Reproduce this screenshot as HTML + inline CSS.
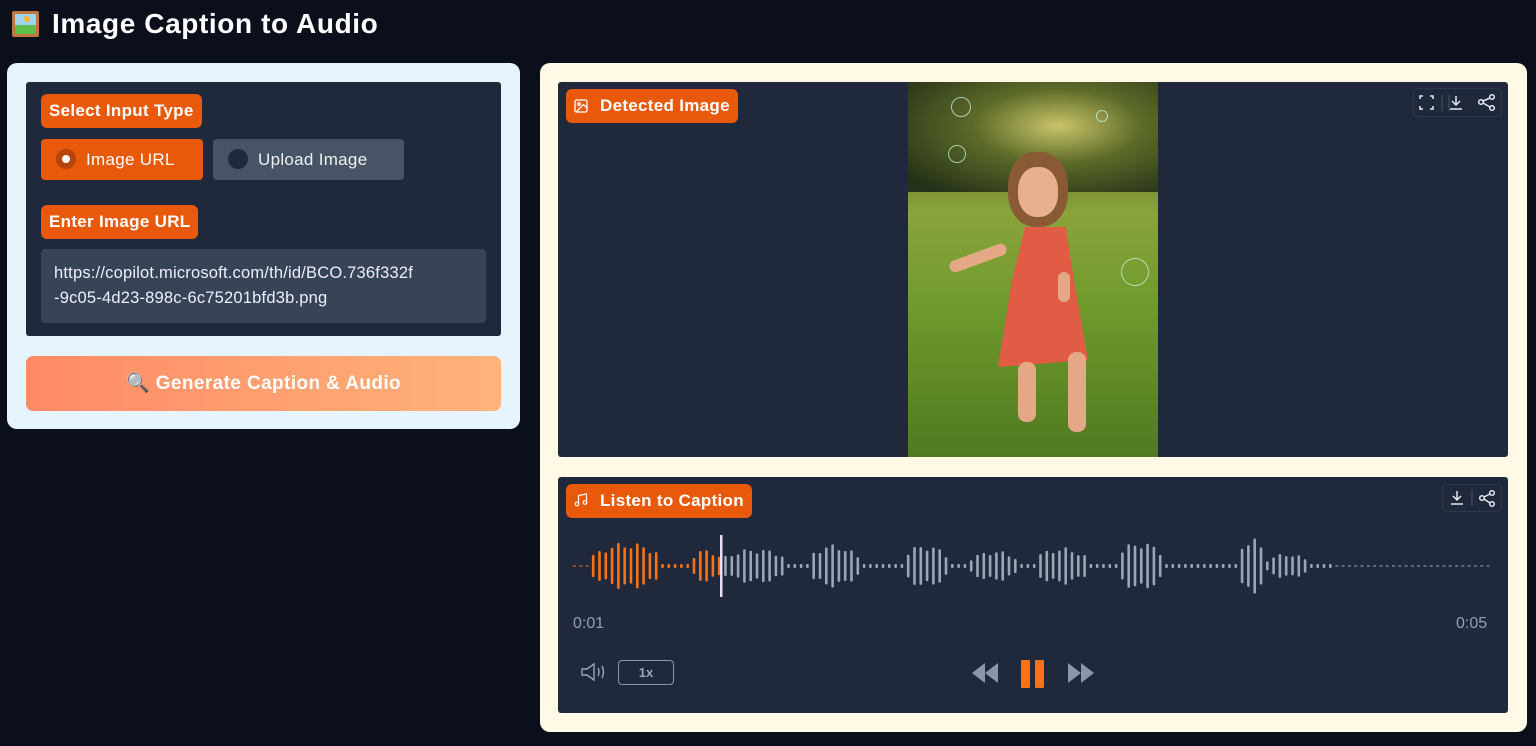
<!DOCTYPE html>
<html><head><meta charset="utf-8"><style>
*{box-sizing:border-box;margin:0;padding:0}
body{width:1536px;height:746px;background:#0b0f1c;font-family:"Liberation Sans",sans-serif;position:relative;overflow:hidden;color:#fff}
.abs{position:absolute}
.tag{position:absolute;background:#e8590c;color:#fff;font-weight:bold;font-size:17px;border-radius:6px;padding:0 8px;line-height:34px;white-space:nowrap;letter-spacing:0.3px}
.dark{background:#1f293b}
</style></head><body>
<div class="abs" style="left:12px;top:11px;width:27px;height:26px;background:#c0773f;border-radius:2px">
 <div class="abs" style="left:3px;top:3px;width:21px;height:20px;background:linear-gradient(#9fd3f0 0 55%,#5cbf4a 55%)"></div>
 <div class="abs" style="left:12px;top:5px;width:6px;height:6px;border-radius:50%;background:#f7b733"></div>
</div>
<div class="abs" style="left:52px;top:6px;font-size:28px;font-weight:bold;line-height:36px;letter-spacing:0.6px">Image Caption to Audio</div>

<div class="abs" style="left:7px;top:63px;width:513px;height:366px;background:#e6f5fd;border-radius:10px"></div>
<div class="abs dark" style="left:26px;top:82px;width:475px;height:254px;border-radius:3px"></div>
<div class="tag" style="left:41px;top:94px">Select Input Type</div>
<div class="abs" style="left:41px;top:139px;width:162px;height:41px;background:#e8590c;border-radius:4px;font-size:17px;line-height:41px;padding-left:45px;letter-spacing:0.3px">Image URL</div>
<div class="abs" style="left:56px;top:149px;width:20px;height:20px;border-radius:50%;background:#b8440a"></div>
<div class="abs" style="left:62px;top:155px;width:8px;height:8px;border-radius:50%;background:#fff"></div>
<div class="abs" style="left:213px;top:139px;width:191px;height:41px;background:#465466;border-radius:4px;font-size:17px;line-height:41px;padding-left:45px;color:#f0f0f0;letter-spacing:0.3px">Upload Image</div>
<div class="abs" style="left:228px;top:149px;width:20px;height:20px;border-radius:50%;background:#1f293b"></div>
<div class="tag" style="left:41px;top:205px">Enter Image URL</div>
<div class="abs" style="left:41px;top:249px;width:445px;height:74px;background:#374456;border-radius:4px;font-size:16.5px;line-height:25px;padding:12px 13px;color:#eef;letter-spacing:0.2px">https://copilot.microsoft.com/th/id/BCO.736f332f<br>-9c05-4d23-898c-6c75201bfd3b.png</div>
<div class="abs" style="left:26px;top:356px;width:475px;height:55px;border-radius:7px;background:linear-gradient(90deg,#ff8a65,#ffb37a);font-size:19px;font-weight:bold;text-align:center;line-height:55px;letter-spacing:0.4px">🔍 Generate Caption &amp; Audio</div>

<div class="abs" style="left:540px;top:63px;width:987px;height:669px;background:#fff9e6;border-radius:10px"></div>
<div class="abs dark" style="left:558px;top:82px;width:950px;height:375px;border-radius:3px"></div>
<div class="abs" style="left:908px;top:82px;width:250px;height:375px;overflow:hidden;background:linear-gradient(#3b4a22 0%,#6b7a2e 18%,#8aa33a 35%,#6f9a2c 60%,#4f7a20 100%)">
 <div class="abs" style="left:0;top:0;width:250px;height:110px;background:radial-gradient(ellipse at 60% 40%,#c9c46a 0%,#5c6a28 40%,#243018 90%)"></div>
 <div class="abs" style="left:100px;top:70px;width:60px;height:75px;border-radius:45%;background:#8a5a35"></div>
 <div class="abs" style="left:110px;top:85px;width:40px;height:50px;border-radius:45%;background:#e8b08c"></div>
 <div class="abs" style="left:90px;top:145px;width:90px;height:140px;background:#e05c45;clip-path:polygon(30% 0,75% 0,85% 40%,100% 95%,0 100%,15% 40%)"></div>
 <div class="abs" style="left:110px;top:280px;width:18px;height:60px;background:#e4a886;border-radius:8px"></div>
 <div class="abs" style="left:160px;top:270px;width:18px;height:80px;background:#e4a886;border-radius:8px"></div>
 <div class="abs" style="left:40px;top:170px;width:60px;height:12px;background:#e4a886;border-radius:6px;transform:rotate(-20deg)"></div>
 <div class="abs" style="left:150px;top:190px;width:12px;height:30px;background:#e4a886;border-radius:6px"></div>
 <div class="abs" style="left:43px;top:15px;width:20px;height:20px;border-radius:50%;border:1px solid #cfe;opacity:.7"></div>
 <div class="abs" style="left:40px;top:63px;width:18px;height:18px;border-radius:50%;border:1px solid #cfe;opacity:.7"></div>
 <div class="abs" style="left:213px;top:176px;width:28px;height:28px;border-radius:50%;border:1px solid #cfe;opacity:.7"></div>
 <div class="abs" style="left:188px;top:28px;width:12px;height:12px;border-radius:50%;border:1px solid #cfe;opacity:.7"></div>
</div>
<div class="tag" style="left:566px;top:89px;padding-left:34px">Detected Image</div>
<svg class="abs" style="left:574px;top:99px" width="14" height="14" viewBox="0 0 14 14" fill="none" stroke="#fff" stroke-width="1.3"><rect x="1" y="1" width="12" height="12" rx="1.5"/><circle cx="5" cy="5" r="1.3"/><path d="M13 9l-3.5-3.5L2 13"/></svg>
<div class="abs" style="left:1413px;top:88px;width:89px;height:29px;border:1px solid #2c3748;border-radius:4px;background:#1f293b"></div>
<svg class="abs" style="left:1413px;top:88px" width="89" height="29" fill="none" stroke="#e6e9ee" stroke-width="1.5"><path d="M7 11V8h3M17 8h3v3M20 18v3h-3M10 21H7v-3"/><path d="M29 7v16M36 7v16" stroke="#3a4556"/><path d="M43 8v9M39 13l4 4 4-4M37 21h12"/><circle cx="68" cy="14" r="2.3"/><circle cx="79" cy="9" r="2.3"/><circle cx="79" cy="20" r="2.3"/><path d="M70 13l7-3M70 15l7 4"/></svg>

<div class="abs dark" style="left:558px;top:477px;width:950px;height:236px;border-radius:3px"></div>
<div class="tag" style="left:566px;top:484px;padding-left:34px">Listen to Caption</div>
<svg class="abs" style="left:574px;top:493px" width="14" height="14" viewBox="0 0 14 14" fill="none" stroke="#fff" stroke-width="1.2"><path d="M4.5 11V2.5l8-1.5V9.5"/><circle cx="3" cy="11" r="1.8"/><circle cx="11" cy="9.5" r="1.8"/></svg>
<div class="abs" style="left:1442px;top:484px;width:60px;height:28px;border:1px solid #2c3748;border-radius:4px"></div>
<svg class="abs" style="left:1442px;top:484px" width="60" height="28" fill="none" stroke="#e6e9ee" stroke-width="1.5"><path d="M15 7v9M11 12l4 4 4-4M9 20h12"/><path d="M30 6v16" stroke="#3a4556"/><circle cx="40" cy="14" r="2.3"/><circle cx="50" cy="9" r="2.3"/><circle cx="50" cy="20" r="2.3"/><path d="M42 13l6-3M42 15l6 4"/></svg>
<svg id="wave" class="abs" style="left:0;top:530px" width="1536" height="72"></svg>
<div class="abs" style="left:573px;top:615px;font-size:16px;color:#8ea0b8">0:01</div>
<div class="abs" style="left:1456px;top:615px;font-size:16px;color:#8ea0b8">0:05</div>
<svg class="abs" style="left:580px;top:661px" width="28" height="22" fill="none" stroke="#9aa6b6" stroke-width="1.4"><path d="M2 8h5l7-5v16l-7-5H2z"/><path d="M18 7q2 4 0 8M22 5q3 6 0 12"/></svg>
<div class="abs" style="left:618px;top:660px;width:56px;height:25px;border:1px solid #8a96a8;border-radius:4px;font-size:13px;font-weight:bold;color:#9aa6b6;text-align:center;line-height:23px">1x</div>
<svg class="abs" style="left:970px;top:660px" width="130" height="28"><path d="M2 13l13-10v20zM15 13l13-10v20z" fill="#8a96a8"/><rect x="51" y="0" width="9" height="28" rx="1" fill="#f97316"/><rect x="65" y="0" width="9" height="28" rx="1" fill="#f97316"/><path d="M98 3l13 10-13 10zM111 3l13 10-13 10z" fill="#8a96a8"/></svg>
<script>
var s=document.getElementById('wave'),h='',cy=36;
var cl=[[592,660,24],[690,720,17],[722,786,18],[808,856,22],[902,946,22],[970,1016,16],[1034,1086,19],[1116,1162,25],[1238,1262,30],[1266,1306,13]];
function line(a,b){h+='<line x1="'+a+'" x2="'+b+'" y1="'+cy+'" y2="'+cy+'" stroke="#9aa6b6" stroke-width="1" stroke-dasharray="3 3"/>';}
for(var x=573;x<1490;x+=6.3){
 var a=0;
 for(var k=0;k<cl.length;k++){var c=cl[k];if(x>=c[0]-1&&x<=c[1]+1){var m=(c[0]+c[1])/2,w=(c[1]-c[0])/2;var t=Math.abs(x-m)/w;a=c[2]*(1-0.5*t*t)*(0.85+0.15*Math.cos(x*1.7));}}
 var col=x<720?'#f97316':'#9aa6b6';
 if(a>0){h+='<rect x="'+x.toFixed(1)+'" y="'+(cy-a).toFixed(1)+'" width="2.6" height="'+(2*a).toFixed(1)+'" rx="1.2" fill="'+col+'"/>';}
 else if(x<590||x>1330){h+='<rect x="'+x.toFixed(1)+'" y="'+(cy-0.5)+'" width="3" height="1" fill="'+col+'"/>';}
 else{h+='<rect x="'+x.toFixed(1)+'" y="'+(cy-2)+'" width="2.6" height="4" rx="1" fill="'+col+'"/>';}
}
h+='<rect x="720" y="5" width="2.5" height="62" fill="#e6e0f0"/>';
s.innerHTML=h;
</script>
</body></html>
